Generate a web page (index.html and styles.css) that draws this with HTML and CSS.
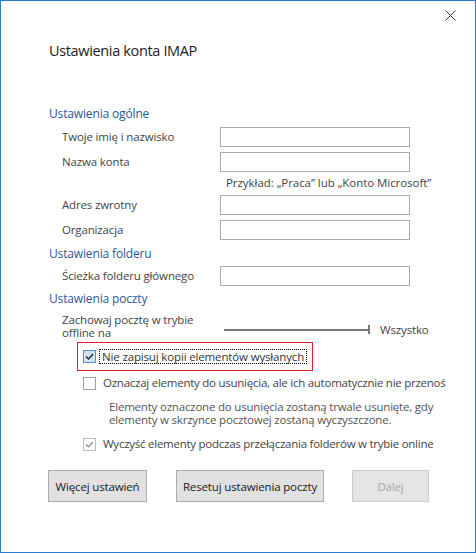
FILE: index.html
```html
<!DOCTYPE html>
<html lang="pl">
<head>
<meta charset="utf-8">
<title>Ustawienia konta IMAP</title>
<link rel="stylesheet" href="styles.css">
</head>
<body>
<div class="window">
  <svg class="close" width="11" height="11" viewBox="0 0 11 11"><path d="M0.5 0.5L10.5 10.5M10.5 0.5L0.5 10.5" stroke="#333" stroke-width="1" fill="none"/></svg>
  <h1 class="title">Ustawienia konta IMAP</h1>

  <div class="section-head first">Ustawienia ogólne</div>
  <div class="row r1"><span class="label">Twoje imię i nazwisko</span><span class="input"></span></div>
  <div class="row r2"><span class="label">Nazwa konta</span><span class="input"></span></div>
  <div class="hint">Przykład: „Praca” lub „Konto Microsoft”</div>
  <div class="row r3"><span class="label">Adres zwrotny</span><span class="input"></span></div>
  <div class="row r2"><span class="label">Organizacja</span><span class="input"></span></div>

  <div class="section-head s2">Ustawienia folderu</div>
  <div class="row r3b"><span class="label">Ścieżka folderu głównego</span><span class="input"></span></div>

  <div class="section-head s3">Ustawienia poczty</div>
  <div class="row slider-row">
    <span class="label two">Zachowaj pocztę w trybie offline na</span>
    <span class="slider"><span class="track"></span><span class="tick"></span></span>
    <span class="slider-value">Wszystko</span>
  </div>

  <div class="highlight">
    <span class="cb checked"><svg width="11" height="11" viewBox="0 0 11 11"><path d="M2 5.5L4.5 8L9 3" stroke="#222" stroke-width="1.3" fill="none"/></svg></span>
    <span class="cb-text focus">Nie zapisuj kopii elementów wysłanych</span>
  </div>
  <div class="cb-row r-mark">
    <span class="cb"></span>
    <span class="cb-text">Oznaczaj elementy do usunięcia, ale ich automatycznie nie przenoś</span>
  </div>
  <p class="desc">Elementy oznaczone do usunięcia zostaną trwale usunięte, gdy elementy w skrzynce pocztowej zostaną wyczyszczone.</p>
  <div class="cb-row r-purge">
    <span class="cb dim"><svg width="11" height="11" viewBox="0 0 11 11"><path d="M2 5.5L4.5 8L9 3" stroke="#8a8a8a" stroke-width="1.2" fill="none"/></svg></span>
    <span class="cb-text">Wyczyść elementy podczas przełączania folderów w trybie online</span>
  </div>

  <div class="buttons">
    <span class="btn b1">Więcej ustawień</span>
    <span class="btn b2">Resetuj ustawienia poczty</span>
    <span class="btn b3 disabled">Dalej</span>
  </div>
</div>
</body>
</html>
```
FILE: styles.css
```css
html, body { margin: 0; padding: 0; background: #fff; }
.window {
  width: 476px; height: 553px; box-sizing: border-box;
  border: 1px solid #2a7ad0; position: relative; background: #fff;
  font-family: "Open Sans", "Noto Sans", sans-serif; font-size: 11.5px;
  color: #444; letter-spacing: -0.15px; overflow: hidden;
}
.close { position: absolute; top: 9px; right: 19px; }
.title {
  margin: 0; padding: 40px 0 0 48px; font-weight: normal;
  font-size: 14.5px; line-height: 20px; color: #222; letter-spacing: -0.35px;
}
.section-head {
  padding-left: 48px; font-size: 12px; line-height: 16px; color: #2b579a;
}
.section-head.first { margin-top: 45px; }
.section-head.s2 { margin-top: 6px; }
.section-head.s3 { margin-top: 5px; }
.row { display: flex; align-items: center; padding-left: 61px; }
.row.r1 { margin-top: 5px; }
.row.r2 { margin-top: 5px; }
.row.r3 { margin-top: 4px; }
.row.r3b { margin-top: 4px; }
.label { width: 158px; flex: none; line-height: 16px; }
.label.two { width: 140px; margin-right: 18px; line-height: 13px; }
.input {
  width: 190px; height: 20px; box-sizing: border-box;
  border: 1px solid #ababab; background: #fff;
}
.hint { padding-left: 225px; line-height: 16px; margin-top: 3px; color: #444; letter-spacing: -0.05px; }
.row.slider-row { margin-top: 6px; align-items: flex-start; }
.slider { position: relative; width: 146px; height: 10px; margin-left: 4px; margin-top: 12px; }
.track { position: absolute; left: 0; top: 4px; width: 145px; height: 2px; background: #777; }
.tick { position: absolute; left: 144px; top: 0; width: 2px; height: 9px; background: #777; }
.slider-value { margin-left: 10px; margin-top: 9px; line-height: 16px; }

.highlight {
  margin: 3px 0 0 76px; width: 236px; height: 29px; box-sizing: border-box;
  border: 1px solid #e0202a; display: flex; align-items: center; padding-left: 5px;
}
.cb {
  width: 13px; height: 13px; box-sizing: border-box; flex: none;
  border: 1px solid #a0a0a0; background: #fff;
  display: flex; align-items: center; justify-content: center;
}
.cb.checked { background: #cce4f7; border-color: #5a8fc4; }
.cb.dim { border-color: #bcbcbc; }
.cb-text { margin-left: 7px; line-height: 16px; white-space: nowrap; color: #333; }
.cb-text.focus { margin-left: 3px; padding: 0 2px 0 2px; border: 1px dotted #000; line-height: 13px; }
.cb-row { display: flex; align-items: center; padding-left: 82px; }
.cb-row .cb-text { color: #444; letter-spacing: -0.25px; }
.r-mark { margin-top: 4px; }
.desc { margin: 9px 0 0 108px; width: 340px; line-height: 13px; color: #555; letter-spacing: -0.2px; }
.r-purge { margin-top: 10px; }

.buttons { display: flex; padding-left: 47px; margin-top: 18px; }
.btn {
  height: 32px; box-sizing: border-box; border: 1px solid #adadad;
  background: #e1e1e1; color: #1a1a1a; display: flex; align-items: center; justify-content: center;
}
.b1 { width: 99px; }
.b2 { width: 148px; margin-left: 29px; }
.b3 { width: 77px; margin-left: 28px; }
.btn.disabled { border-color: #cccccc; background: #e5e5e5; color: #a8a8a8; }
```
